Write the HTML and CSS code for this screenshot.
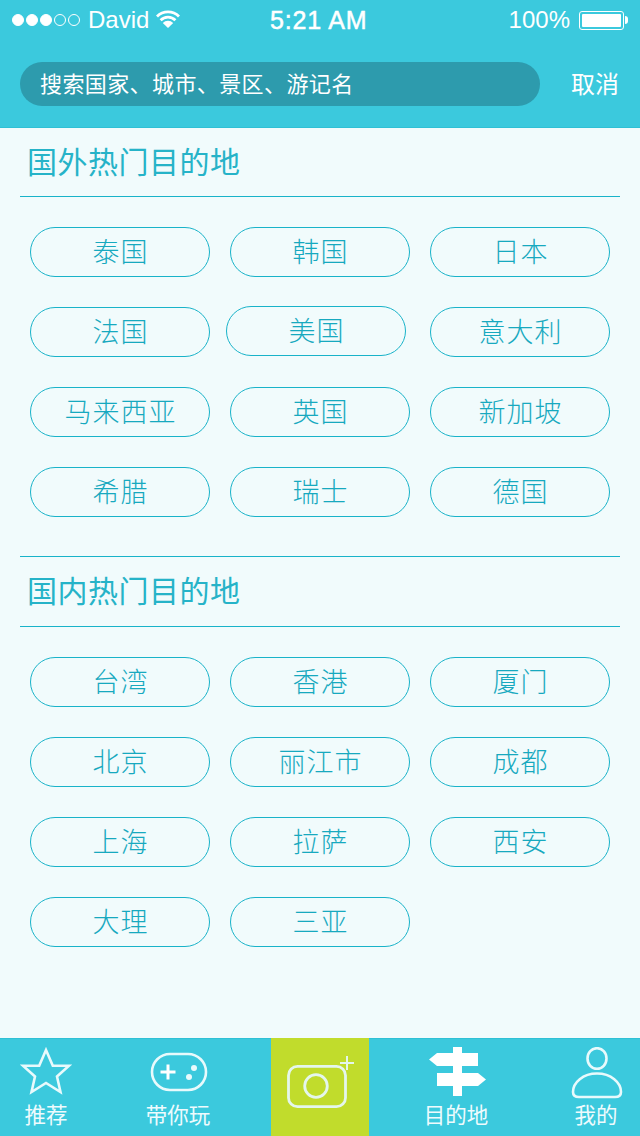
FILE: index.html
```html
<!DOCTYPE html>
<html lang="zh-CN">
<head>
  <meta charset="UTF-8">
  <meta name="viewport" content="width=device-width, initial-scale=1.0">
  <title>目的地</title>
  <link rel="stylesheet" href="styles.css">
</head>
<body>
  <div class="phone">
    <header class="top-bar">
      <div class="status-bar">
        <div class="status-left">
          <span class="dot"></span><span class="dot"></span><span class="dot"></span>
          <span class="dot empty"></span><span class="dot empty"></span>
          <span class="carrier">David</span>
          <svg class="wifi" width="24" height="18" viewBox="0 0 24 18">
            <path d="M1 6.500a15.500 15.500 0 0 1 22 0M4.600 10.200a10.400 10.400 0 0 1 14.800 0" fill="none" stroke="#fff" stroke-width="2.800"/>
            <path d="M12 18L6.800 12.900a7.400 7.400 0 0 1 10.400 0z" fill="#fff"/>
          </svg>
        </div>
        <div class="status-time">5:21 AM</div>
        <div class="status-right">
          <span>100%</span>
          <span class="battery"><span class="battery-fill"></span></span>
          <span class="battery-tip"></span>
        </div>
      </div>
      <div class="search-row">
        <div class="search-box">搜索国家、城市、景区、游记名</div>
        <div class="cancel">取消</div>
      </div>
    </header>

    <main class="content">
      <section class="section">
        <h2 class="section-title">国外热门目的地</h2>
        <div class="chips">
          <a class="chip">泰国</a>
          <a class="chip">韩国</a>
          <a class="chip">日本</a>
          <a class="chip">法国</a>
          <a class="chip chip-off">美国</a>
          <a class="chip">意大利</a>
          <a class="chip">马来西亚</a>
          <a class="chip">英国</a>
          <a class="chip">新加坡</a>
          <a class="chip">希腊</a>
          <a class="chip">瑞士</a>
          <a class="chip">德国</a>
        </div>
      </section>
      <section class="section section-second">
        <h2 class="section-title">国内热门目的地</h2>
        <div class="chips">
          <a class="chip">台湾</a>
          <a class="chip">香港</a>
          <a class="chip">厦门</a>
          <a class="chip">北京</a>
          <a class="chip">丽江市</a>
          <a class="chip">成都</a>
          <a class="chip">上海</a>
          <a class="chip">拉萨</a>
          <a class="chip">西安</a>
          <a class="chip">大理</a>
          <a class="chip">三亚</a>
        </div>
      </section>
    </main>

    <nav class="tab-bar">
      <div class="tab tab-star">
        <svg width="52" height="50" viewBox="0 0 52 50">
          <path d="M26 5l6.800 15.800H49L37 31.500 40.500 47 26 38 11.500 47 15 31.500 3 20.800h16.200z" fill="none" stroke="#e8fafc" stroke-width="2.600" stroke-miterlimit="8"/>
        </svg>
        <span class="tab-label">推荐</span>
      </div>
      <div class="tab tab-game">
        <svg width="58" height="40" viewBox="0 0 58 40">
          <rect x="2" y="2" width="54" height="36" rx="18" fill="none" stroke="#e8fafc" stroke-width="2.600"/>
          <path d="M18 12.500v15M10.500 20h15" stroke="#fff" stroke-width="3"/>
          <circle cx="44" cy="16" r="3" fill="#e8fafc"/>
          <circle cx="39" cy="25" r="3" fill="#e8fafc"/>
        </svg>
        <span class="tab-label">带你玩</span>
      </div>
      <div class="tab-camera">
        <svg width="98" height="98" viewBox="0 0 98 98">
          <rect x="17.500" y="28.400" width="57" height="40.300" rx="9" fill="none" stroke="#e4f6ec" stroke-width="2.800"/>
          <circle cx="45" cy="48" r="11.300" fill="none" stroke="#e4f6ec" stroke-width="2.800"/>
          <path d="M76 18v14M69 25h14" stroke="#e4f6ec" stroke-width="2"/>
        </svg>
      </div>
      <div class="tab tab-sign">
        <svg width="59" height="50" viewBox="0 0 59 50">
          <path d="M25 1h9v6h16v13H34v7h16l8 6.500-8 6.500H34v10h-9V40H9V27h16v-7H9L1 13.500 9 7h16z" fill="#fff"/>
        </svg>
        <span class="tab-label">目的地</span>
      </div>
      <div class="tab tab-me">
        <svg width="52" height="52" viewBox="0 0 52 52">
          <ellipse cx="26" cy="11.500" rx="9.500" ry="10.300" fill="none" stroke="#e8fafc" stroke-width="2.600"/>
          <path d="M26 26.500c-14 0-24 9-24 18.500 0 3.500 2 5 6 5h36c4 0 6-1.500 6-5 0-9.500-10-18.500-24-18.500z" fill="none" stroke="#e8fafc" stroke-width="2.600"/>
        </svg>
        <span class="tab-label">我的</span>
      </div>
    </nav>
  </div>
</body>
</html>
```

FILE: styles.css
```css
* { box-sizing: border-box; }

body {
  margin: 0;
  font-family: "Noto Sans CJK SC", "Noto Sans", sans-serif;
  font-weight: 300;
  background-color: #f1fbfc;
}

.phone {
  width: 640px;
  height: 1136px;
  display: flex;
  flex-direction: column;
  overflow: hidden;
}

.top-bar {
  height: 128px;
  background-color: #3bc9dd;
  border-bottom: 1px solid #2fc0d5;
  color: white;
}

.status-bar {
  height: 40px;
  padding: 0 12px;
  display: flex;
  align-items: center;
  font-family: "Liberation Sans", sans-serif;
  font-weight: 400;
  font-size: 24px;
}

.status-left { display: flex; align-items: center; gap: 2px; width: 258px; }
.dot { width: 12px; height: 12px; border-radius: 50%; background-color: white; border: 1px solid white; }
.dot.empty { background: none; }
.carrier { margin-left: 6px; }
.wifi { margin-left: 5px; margin-top: -2px; }

.status-time { font-size: 25px; letter-spacing: 0.8px; -webkit-text-stroke: 0.5px white; }

.status-right { display: flex; align-items: center; margin-left: auto; }
.battery { width: 45px; height: 19px; border: 1px solid white; border-radius: 3px; padding: 2px; margin-left: 9px; }
.battery-fill { display: block; height: 100%; background-color: white; border-radius: 1px; }
.battery-tip { width: 3px; height: 8px; background-color: white; margin-left: 1px; border-radius: 0 3px 3px 0; }

.search-row {
  display: flex;
  align-items: center;
  justify-content: space-between;
  padding: 22px 21px 0 20px;
}

.search-box {
  width: 520px;
  height: 44px;
  padding-left: 20px;
  border-radius: 22px;
  background-color: #2d9bad;
  font-size: 22px;
  font-weight: 400;
  letter-spacing: 0.4px;
  line-height: 41px;
}

.cancel { font-size: 24px; font-weight: 400; line-height: 41px; height: 44px; }

.content { flex: 1; padding: 0 20px; }

.section-title {
  margin: 0;
  height: 69px;
  padding: 8px 0 0 7px;
  border-bottom: 1px solid #19b3c9;
  font-size: 30px;
  font-weight: 400;
  line-height: 48px;
  letter-spacing: 0.5px;
  color: #26b3c8;
}

.section-second {
  margin-top: 39px;
  border-top: 1px solid #19b3c9;
}

.section-second .section-title { height: 70px; }

.chips {
  padding: 30px 10px 0;
  display: grid;
  grid-template-columns: repeat(3, 180px);
  column-gap: 20px;
  row-gap: 30px;
}

.chip {
  height: 50px;
  border: 1px solid #19b3c9;
  border-radius: 25px;
  padding-left: 1px;
  font-size: 27px;
  letter-spacing: 1px;
  line-height: 45px;
  text-align: center;
  color: #17a9bf;
}

.chip-off { width: 180px; margin: -1px 0 1px -4px; }

.tab-bar {
  height: 98px;
  background-color: #3bc9dd;
  border-top: 1px solid #2fc0d5;
  display: flex;
  color: #eefbfd;
}

.tab {
  display: flex;
  flex-direction: column;
  align-items: center;
  justify-content: flex-end;
  padding-bottom: 7px;
}

.tab-label { font-size: 21.500px; font-weight: 400; line-height: 29px; }

.tab-star { width: 92px; padding-bottom: 8px; }
.tab-star svg { margin-bottom: 4px; }
.tab-game { width: 172px; padding-bottom: 8px; }
.tab-game svg { margin: 0 0 7px 2px; }
.tab-sign { width: 174px; padding-bottom: 8px; }
.tab-sign svg { margin: 0 0 3px 3px; }
.tab-me { width: 88px; margin-left: 9px; padding-bottom: 8px; }
.tab-me svg { margin-left: 1px; }

.tab-camera {
  width: 98px;
  height: 98px;
  margin: -1px 0 0 7px;
  background-color: #c1dc2c;
}
```
